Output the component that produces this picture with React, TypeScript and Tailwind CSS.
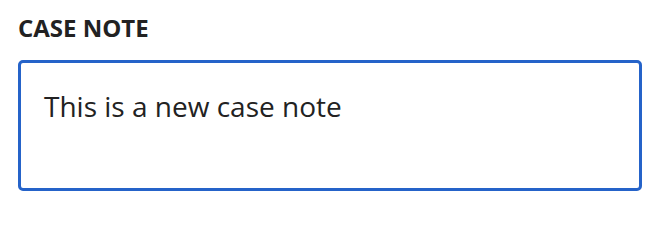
export default function App() {
  return (
    <div className="min-h-screen bg-white px-[18px] pt-[12px]" style={{ fontFamily: '"Open Sans", "Noto Sans", sans-serif' }}>
      <label htmlFor="case-note" className="block text-[24px] leading-8 font-bold text-[#222222]">
        CASE NOTE
      </label>
      <textarea
        id="case-note"
        defaultValue="This is a new case note"
        className="mt-4 block h-[131px] w-[624px] resize-none rounded-[5px] border-[3px] border-[#2563c9] bg-white px-[23px] pt-[25px] pb-[16px] text-[28px] leading-9 text-[#222222] outline-none"
      />
    </div>
  )
}
